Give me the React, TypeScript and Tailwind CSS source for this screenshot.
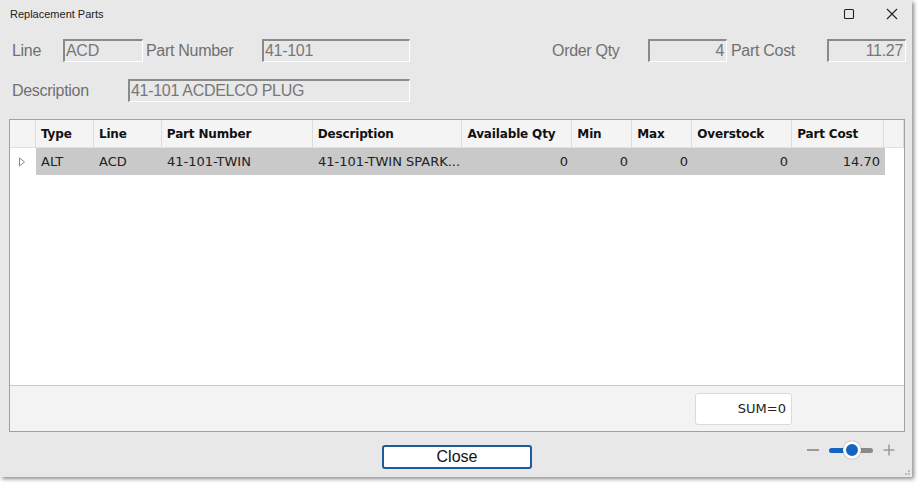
import React from 'react';

const cols = [
  { key: 'type', label: 'Type', w: 58, align: 'left' },
  { key: 'line', label: 'Line', w: 68, align: 'left' },
  { key: 'part', label: 'Part Number', w: 151, align: 'left' },
  { key: 'desc', label: 'Description', w: 150, align: 'left' },
  { key: 'avail', label: 'Available Qty', w: 110, align: 'right' },
  { key: 'min', label: 'Min', w: 60, align: 'right' },
  { key: 'max', label: 'Max', w: 60, align: 'right' },
  { key: 'over', label: 'Overstock', w: 100, align: 'right' },
  { key: 'cost', label: 'Part Cost', w: 92, align: 'right' },
];

const row: Record<string, string> = {
  type: 'ALT',
  line: 'ACD',
  part: '41-101-TWIN',
  desc: '41-101-TWIN SPARK...',
  avail: '0',
  min: '0',
  max: '0',
  over: '0',
  cost: '14.70',
};

const Field = ({ value, w, right }: { value: string; w: string; right?: boolean }) => (
  <div
    className={`${w} h-[23px] bg-[#e8e8e8] border-t-2 border-l-2 border-t-[#8a8a8a] border-l-[#8a8a8a] border-b border-r border-b-white border-r-white flex items-center px-[1px] text-[16px] tracking-[-0.3px] text-[#777] leading-none ${right ? 'justify-end pr-[2px]' : ''}`}
  >
    {value}
  </div>
);

const Label = ({ text, w }: { text: string; w: string }) => (
  <div className={`${w} text-[16px] tracking-[-0.3px] text-[#707070] leading-none`}>{text}</div>
);

export default function App() {
  return (
    <div className="w-[920px] h-[483px] bg-white" style={{ fontFamily: '"Liberation Sans", Arial, sans-serif' }}>
      <div className="w-[912px] h-[477px] bg-[#e8e8e8] shadow-[2px_2px_4px_rgba(0,0,0,0.45)] flex flex-col relative">
        {/* title bar */}
        <div className="h-[30px] flex items-center pl-[10px] pr-[14px]">
          <div className="text-[11px] text-[#222] flex-1 -mt-[2px]">Replacement Parts</div>
          <svg width="12" height="12" viewBox="0 0 12 12" className="mr-[31px] -mt-[2px]">
            <rect x="1.5" y="1.5" width="9" height="9" rx="1" fill="none" stroke="#222" strokeWidth="1.1" />
          </svg>
          <svg width="12" height="12" viewBox="0 0 12 12" className="-mt-[2px]">
            <path d="M1 1 L11 11 M11 1 L1 11" stroke="#222" strokeWidth="1.1" />
          </svg>
        </div>

        {/* fields row 1 */}
        <div className="flex items-center h-[23px] mt-[9px] pl-[12px]">
          <Label text="Line" w="w-[51px]" />
          <Field value="ACD" w="w-[80px]" />
          <div className="w-[3px]" />
          <Label text="Part Number" w="w-[116px]" />
          <Field value="41-101" w="w-[148px]" />
          <div className="w-[142px]" />
          <Label text="Order Qty" w="w-[96px]" />
          <Field value="4" w="w-[79px]" right />
          <div className="w-[4px]" />
          <Label text="Part Cost" w="w-[96px]" />
          <Field value="11.27" w="w-[79px]" right />
        </div>

        {/* fields row 2 */}
        <div className="flex items-center h-[23px] mt-[17px] pl-[12px]">
          <Label text="Description" w="w-[116px]" />
          <Field value="41-101 ACDELCO PLUG" w="w-[282px]" />
        </div>

        {/* grid */}
        <div
          className="ml-[9px] mt-[17px] w-[896px] h-[313px] border border-[#a0a0a0] bg-white flex flex-col"
          style={{ fontFamily: 'Tahoma, "DejaVu Sans", sans-serif' }}
        >
          <div className="flex h-[28px] bg-[#f4f4f4] border-b border-[#e0e0e0]">
            <div className="w-[26px] border-r border-[#dcdcdc]" />
            {cols.map((c) => (
              <div
                key={c.key}
                className="border-r border-[#dcdcdc] flex items-center pl-[5px] text-[12px] font-bold text-[#111] tracking-[-0.15px]"
                style={{ width: c.w }}
              >
                {c.label}
              </div>
            ))}
            <div className="w-[20px] border-r border-[#dcdcdc]" />
          </div>
          <div className="flex h-[27px]">
            <div className="w-[26px] flex items-center justify-center">
              <svg width="8" height="10" viewBox="0 0 8 10" className="-ml-[3px]">
                <path d="M1.5 1 L6.5 5 L1.5 9 Z" fill="none" stroke="#888" strokeWidth="1" />
              </svg>
            </div>
            {cols.map((c) => (
              <div
                key={c.key}
                className={`bg-[#c9c9c9] flex items-center text-[13px] text-[#222] ${c.align === 'right' ? 'justify-end pr-[5px]' : 'pl-[5px]'}`}
                style={{ width: c.w }}
              >
                {row[c.key]}
              </div>
            ))}
          </div>
          <div className="flex-1" />
          <div className="h-[46px] bg-[#f3f3f3] border-t border-[#c8c8c8] flex items-center">
            <div className="ml-[685px] w-[97px] h-[32px] bg-white border border-[#dadada] rounded-[3px] flex items-center justify-end pr-[5px] text-[13px] text-[#222]">
              SUM=0
            </div>
          </div>
        </div>

        {/* bottom bar */}
        <div className="flex items-center h-[24px] mt-[13px]">
          <div className="w-[382px]" />
          <button className="w-[150px] h-[24px] bg-white border-2 border-[#1d5a9a] rounded-[3px] text-[16px] text-[#111] leading-none flex items-center justify-center">
            Close
          </button>
          <div className="flex-1" />
          <div className="flex items-center mr-[17px] -mt-[14px]">
            <div className="w-[12px] h-[2px] bg-[#999]" />
            <div className="w-[10px]" />
            <div className="w-[16px] h-[5px] bg-[#1565c0] rounded-l-full" />
            <div className="w-[18px] h-[18px] rounded-full bg-[#1565c0] border-[3px] border-white shadow-[0_0_1px_rgba(0,0,0,0.6)] -mx-[2px] z-10" />
            <div className="w-[14px] h-[5px] bg-[#8a8a8a] rounded-r-full" />
            <div className="w-[10px]" />
            <svg width="12" height="12" viewBox="0 0 12 12">
              <path d="M6 0.5 V11.5 M0.5 6 H11.5" stroke="#999" strokeWidth="1.5" />
            </svg>
          </div>
        </div>
        <svg width="6" height="6" viewBox="0 0 6 6" className="absolute right-[1px] bottom-[1px]">
          <rect x="3" y="0" width="2" height="2" fill="#bbb" />
          <rect x="0" y="3" width="2" height="2" fill="#bbb" />
          <rect x="3" y="3" width="2" height="2" fill="#bbb" />
        </svg>
      </div>
    </div>
  );
}
